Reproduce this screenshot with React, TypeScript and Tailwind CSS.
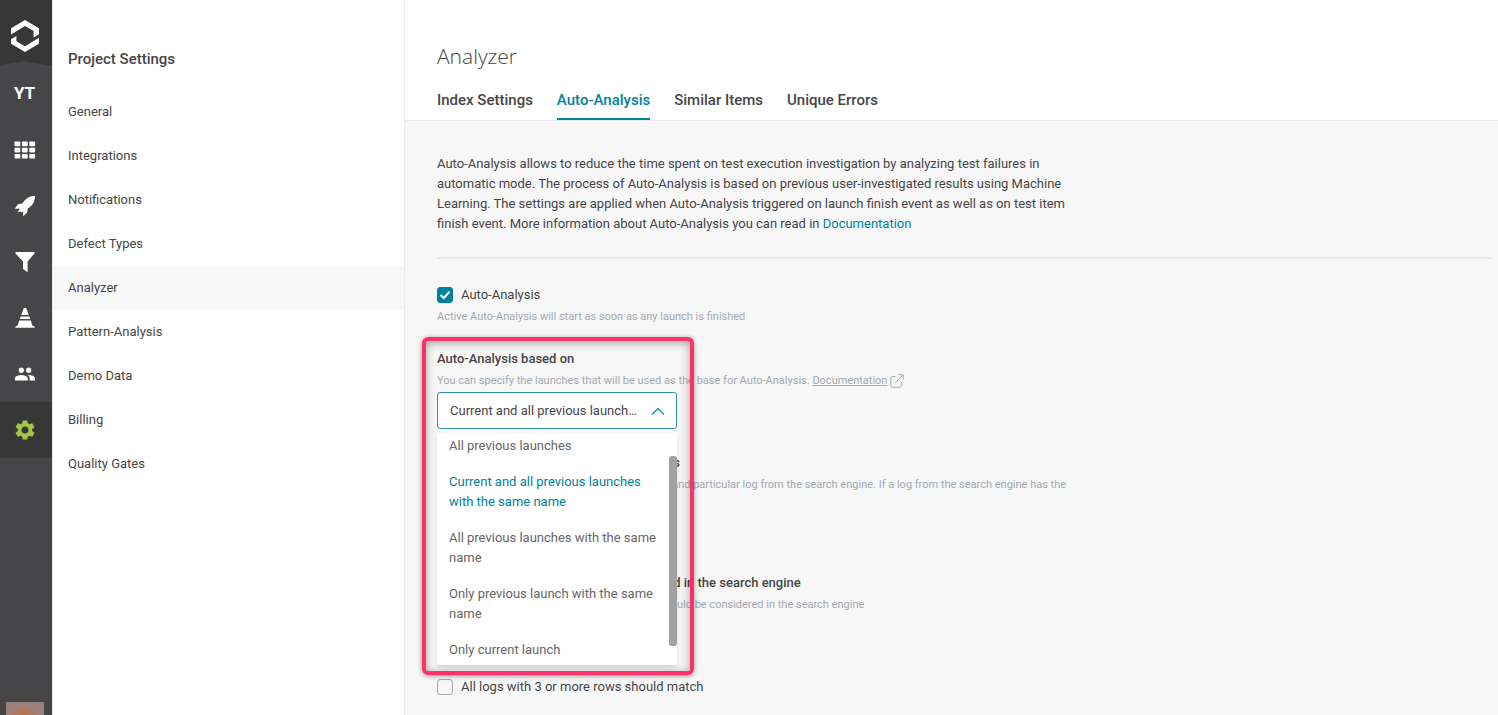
import React from 'react';
import { MdPeople, MdSettings } from 'react-icons/md';

const GridIcon = () => (
  <svg width="22" height="18" viewBox="0 0 22 18" fill="currentColor" aria-hidden="true">
    {[0, 6.2, 12.4].map((y) =>
      [0, 7.4, 14.8].map((x) => <rect key={`${x}-${y}`} x={x + 0.5} y={y + 0.5} width="5.8" height="4.7" rx="0.8" />)
    )}
  </svg>
);

const RocketIcon = () => (
  <svg width="22" height="22" viewBox="0 0 22 22" fill="currentColor" aria-hidden="true">
    <path d="M21 1 C15 1 11.5 3.5 8.5 8.5 L4.5 9 C3 10.5 1.8 12 1 14 L5.2 13.4 L5.6 14.6 L3.2 17.4 L6 16.6 L7 17.2 L9.2 16.8 L9 21 C10.8 20 12.2 18.6 13.2 17 L13.8 13.6 C18.5 10.5 21 7 21 1 Z" />
  </svg>
);

const FilterIcon = () => (
  <svg width="20" height="22" viewBox="0 0 20 22" fill="currentColor" aria-hidden="true">
    <path d="M0.5 1 H19.5 V2.4 L12.6 10.4 V21.2 L8 18 V10.4 L0.5 2.4 Z" />
  </svg>
);

const ConeIcon = () => (
  <svg width="20" height="22" viewBox="0 0 20 22" fill="currentColor" aria-hidden="true">
    <path d="M8.8 1 H11.2 L13.8 8 H6.2 Z" />
    <path d="M5.6 9.6 H14.4 L15.2 12 H4.8 Z" />
    <path d="M4.2 13.6 H15.8 L17.4 18.4 L19.6 19.4 V20.8 H0.4 V19.4 L2.6 18.4 Z" />
  </svg>
);

const Logo = () => (
  <svg width="30" height="34" viewBox="0 0 30 34" fill="#fff" aria-hidden="true">
    <path d="M1 9.2 L15 1 L29 9.2 V15.2 L23.6 18.4 V12 L15 7 L1 15.4 Z" />
    <path d="M29 24.8 L15 33 L1 24.8 V20.2 L6.4 17 V22.2 L15 27.2 L29 18.8 Z" />
  </svg>
);

const navItems = [
  { name: 'Dashboards', icon: <GridIcon /> },
  { name: 'Launches', icon: <RocketIcon /> },
  { name: 'Filters', icon: <FilterIcon /> },
  { name: 'Debug', icon: <ConeIcon /> },
  { name: 'Members', icon: <MdPeople size={22} /> },
  { name: 'Settings', icon: <MdSettings size={24} />, active: true },
];

const settings = [
  'General',
  'Integrations',
  'Notifications',
  'Defect Types',
  'Analyzer',
  'Pattern-Analysis',
  'Demo Data',
  'Billing',
  'Quality Gates',
];

const tabs = ['Index Settings', 'Auto-Analysis', 'Similar Items', 'Unique Errors'];

const launchOptions = [
  'All previous launches',
  'Current and all previous launches with the same name',
  'All previous launches with the same name',
  'Only previous launch with the same name',
  'Only current launch',
];

const Sidebar = () => (
  <aside className="flex w-[52px] shrink-0 flex-col bg-[#464547] text-white">
    <div className="relative flex h-[66px] items-center justify-center pt-1.5 pr-[3px]">
      <svg className="absolute inset-0 h-full w-full" viewBox="0 0 52 66" fill="#373737" aria-hidden="true">
        <path d="M0 0 H52 V66 L24 61 L0 65 Z" />
      </svg>
      <a href="#home" aria-label="Home" className="relative">
        <Logo />
      </a>
    </div>
    <button className="flex h-14 items-center justify-center pr-[3px] text-[17px] font-bold">YT</button>
    <nav>
      {navItems.map((item) => (
        <a
          key={item.name}
          href={`#${item.name.toLowerCase()}`}
          aria-label={item.name}
          className={`flex h-14 items-center justify-center pr-[3px] ${item.active ? 'bg-[#373737] text-[#a3c644]' : ''}`}
        >
          {item.icon}
        </a>
      ))}
    </nav>
    <div className="mt-auto ml-1.5 h-[13px] w-[38px] bg-radial-[at_45%_100%] from-[#b9704f] via-[#a08078] to-[#8b8486]" />
  </aside>
);

const SettingsMenu = () => (
  <div className="w-[353px] shrink-0 border-x border-[#e9ebef] bg-white">
    <h2 className="px-[15px] pt-[49px] text-[15px] leading-5 font-medium text-[#464547]">Project Settings</h2>
    <nav className="mt-[21px]">
      {settings.map((name) => (
        <a
          key={name}
          href="#settings"
          className={`flex h-11 items-center px-[15px] text-[13px] text-[#464547] ${name === 'Analyzer' ? 'bg-[#f7f7f7]' : ''}`}
        >
          {name}
        </a>
      ))}
    </nav>
  </div>
);

const Hint = ({ children }: { children: React.ReactNode }) => (
  <p className="mt-0.5 max-w-[640px] text-[11px] leading-5 text-[#a2aab5]">{children}</p>
);

const Title = ({ children }: { children: React.ReactNode }) => (
  <h3 className="text-[13px] leading-5 font-medium text-[#464547]">{children}</h3>
);

const Checkbox = ({ label, checked }: { label: string; checked?: boolean }) => (
  <label className="flex items-center gap-2 text-[13px] leading-5 text-[#464547]">
    <span className="relative flex h-4 w-4">
      <input
        type="checkbox"
        defaultChecked={checked}
        className="peer h-4 w-4 appearance-none rounded-[3px] border border-[#a2aab5] bg-[#f7f7f7] checked:border-[#00829b] checked:bg-[#00829b]"
      />
      <svg
        className="pointer-events-none absolute inset-0 hidden peer-checked:block"
        viewBox="0 0 16 16"
        fill="none"
        stroke="#fff"
        strokeWidth="2"
        aria-hidden="true"
      >
        <path d="M3.5 8 L6.8 11 L12.5 4.8" />
      </svg>
    </span>
    {label}
  </label>
);

const LaunchSelect = () => (
  <div className="relative mt-px w-60">
    <select
      id="base"
      defaultValue={launchOptions[1]}
      className="block h-[37px] w-full appearance-none truncate rounded-[3px] border border-[#2b92a8] bg-white pr-9 pl-3 text-[13px] text-[#464547]"
    >
      {launchOptions.map((option) => (
        <option key={option}>{option}</option>
      ))}
    </select>
    <svg className="pointer-events-none absolute top-[15px] right-3" width="14" height="9" viewBox="0 0 14 9" fill="none" stroke="#00829b" strokeWidth="1.1" aria-hidden="true">
      <path d="M1 7.5 L7 1.5 L13 7.5" />
    </svg>
    <div className="absolute top-full left-0 z-10 mt-1 w-60 rounded-[3px] bg-white pt-[3px] pb-[5px] shadow-md">
      <ul role="listbox" aria-label="Launches" className="flex flex-col gap-4 pr-4 pl-3 text-[13px] leading-5 text-[#666]">
        {launchOptions.map((option, index) => (
          <li key={option} role="option" aria-selected={index === 1} className={index === 1 ? 'text-[#00829b]' : ''}>
            {option}
          </li>
        ))}
      </ul>
      <div className="absolute top-[23px] right-0 h-[190px] w-2 rounded-[3px] bg-[#a2a2a2]" />
    </div>
  </div>
);

const App = () => {
  return (
    <div className="flex min-h-screen bg-[#f7f7f7] font-['Roboto',sans-serif]">
      <Sidebar />
      <SettingsMenu />
      <main className="min-w-0 flex-1">
        <header className="border-b border-[#e7eaee] bg-white px-8 pt-[41px]">
          <h1 className="font-['Open_Sans',sans-serif] text-[21px] leading-[30px] font-light text-[#464547]">Analyzer</h1>
          <div className="mt-[9px] flex gap-6">
            {tabs.map((tab) => (
              <button
                key={tab}
                className={`h-10 border-b-2 pt-0.5 text-[15px] font-medium ${tab === 'Auto-Analysis' ? 'border-[#00829b] text-[#00829b]' : 'border-transparent text-[#464547]'}`}
              >
                {tab}
              </button>
            ))}
          </div>
        </header>

        <div className="pt-[33px] pr-1.5 pl-8">
          <p className="max-w-[640px] text-[13px] leading-5 text-[#464547]">
            Auto-Analysis allows to reduce the time spent on test execution investigation by analyzing test failures in
            automatic mode. The process of Auto-Analysis is based on previous user-investigated results using Machine
            Learning. The settings are applied when Auto-Analysis triggered on launch finish event as well as on test item
            finish event. More information about Auto-Analysis you can read in{' '}
            <a href="#docs" className="text-[#00829b]">Documentation</a>
          </p>
          <hr className="mt-[23px] border-t-2 border-[#e5e8ec]" />

          <section className="mt-[26px]">
            <Checkbox label="Auto-Analysis" checked />
            <Hint>Active Auto-Analysis will start as soon as any launch is finished</Hint>
          </section>

          <section className="relative mt-[22px]">
            <Title>
              <label htmlFor="base">Auto-Analysis based on</label>
            </Title>
            <Hint>
              You can specify the launches that will be used as the base for Auto-Analysis.{' '}
              <a href="#docs" className="underline">Documentation</a>
              <svg className="ml-[3px] inline-block align-middle" width="14" height="14" viewBox="0 0 14 14" fill="none" stroke="currentColor" aria-hidden="true">
                <path d="M5.5 2.5 H2.5 Q0.8 2.5 0.8 4 V11.7 Q0.8 13.2 2.5 13.2 H9.7 Q11.3 13.2 11.3 11.7 V8.5 M5 9 L13 1 M8.3 0.8 H13.2 V5.7" />
              </svg>
            </Hint>
            <LaunchSelect />
            <div className="pointer-events-none absolute -top-3 -left-[15px] z-20 h-[338px] w-[272px] rounded-md border-4 border-[#ff2f6b] shadow-[0_1px_5px_rgba(0,0,0,0.4),inset_0_2px_10px_rgba(0,0,0,0.35)]" />
          </section>

          <section className="mt-6 min-h-24">
            <Title>Minimum should match in the launch logs</Title>
            <Hint>
              Percent of words equality between analyzed log and particular log from the search engine. If a log from the search engine has the
            </Hint>
          </section>

          <section className="mt-6">
            <Title>Number of logs that should be considered in the search engine</Title>
            <Hint>The number of first lines of log message that should be considered in the search engine</Hint>
          </section>

          <section className="mt-[62px] pb-4">
            <Checkbox label="All logs with 3 or more rows should match" />
          </section>
        </div>
      </main>
    </div>
  );
};

export default App;
